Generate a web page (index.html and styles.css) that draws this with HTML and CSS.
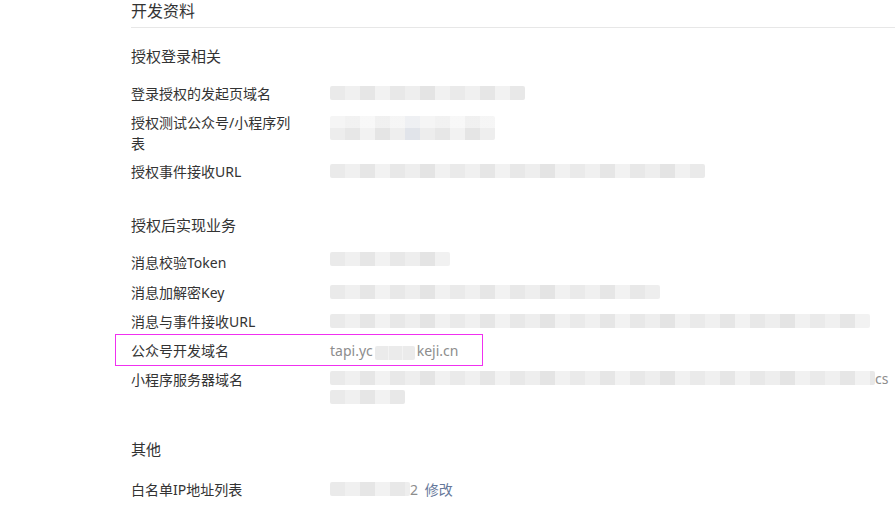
FILE: index.html
```html
<!DOCTYPE html>
<html lang="zh-CN">
<head>
    <meta charset="UTF-8">
    <meta name="viewport" content="width=device-width, initial-scale=1.0">
    <title>开发资料</title>
    <link rel="stylesheet" href="styles.css">
</head>
<body>
    <div class="page">
        <h2 class="title">开发资料</h2>

        <div class="section first">
            <h3>授权登录相关</h3>
            <div class="rows">
                <div class="row">
                    <span class="label">登录授权的发起页域名</span>
                    <span class="value"><i class="mosaic m-195"></i></span>
                </div>
                <div class="row">
                    <span class="label multi">授权测试公众号/小程序列表</span>
                    <span class="value"><i class="mosaic m-165 tall"></i></span>
                </div>
                <div class="row">
                    <span class="label">授权事件接收URL</span>
                    <span class="value"><i class="mosaic m-375"></i></span>
                </div>
            </div>
        </div>

        <div class="section">
            <h3>授权后实现业务</h3>
            <div class="rows">
                <div class="row">
                    <span class="label">消息校验Token</span>
                    <span class="value"><i class="mosaic m-120 high"></i></span>
                </div>
                <div class="row">
                    <span class="label">消息加解密Key</span>
                    <span class="value"><i class="mosaic m-330"></i></span>
                </div>
                <div class="row">
                    <span class="label">消息与事件接收URL</span>
                    <span class="value"><i class="mosaic m-540"></i></span>
                </div>
                <div class="row marked">
                    <span class="label">公众号开发域名</span>
                    <span class="value">tapi.yc<i class="mosaic m-42 low"></i>keji.cn</span>
                </div>
                <div class="row">
                    <span class="label">小程序服务器域名</span>
                    <span class="value wrap"><i class="mosaic m-545"></i>cs<br><i class="mosaic m-75"></i></span>
                </div>
            </div>
        </div>

        <div class="section">
            <h3 class="spaced">其他</h3>
            <div class="rows">
                <div class="row">
                    <span class="label">白名单IP地址列表</span>
                    <span class="value"><i class="mosaic m-80"></i>2 <a class="edit" href="#">修改</a></span>
                </div>
            </div>
        </div>
    </div>
</body>
</html>
```

FILE: styles.css
```css
body {
    margin: 0;
    background-color: #fff;
    font-family: "Noto Sans", "Noto Sans CJK SC", sans-serif;
    color: #333;
    overflow: hidden;
}
.page {
    padding-left: 131px;
}
.title {
    margin: 0;
    font-size: 16px;
    font-weight: normal;
    line-height: 22px;
    padding-bottom: 5px;
    border-bottom: 1px solid #e7e7e7;
}
.section {
    margin-top: 31px;
}
.section.first {
    margin-top: 17px;
}
.section h3 {
    margin: 0 0 16px;
    font-size: 15px;
    font-weight: normal;
    line-height: 22px;
}
.section h3.spaced {
    margin-bottom: 19px;
}
.rows {
    display: flex;
    flex-direction: column;
    gap: 7.2px;
}
.row {
    display: grid;
    grid-template-columns: 166px 1fr;
    column-gap: 33px;
    font-size: 14px;
    line-height: 22px;
    position: relative;
}
.row .label.multi {
    line-height: 21px;
}
.row.marked::after {
    content: "";
    position: absolute;
    left: -16px;
    top: -6px;
    width: 366px;
    height: 30px;
    border: 1px solid #f030f0;
}
.value {
    color: #8d8d8d;
    white-space: nowrap;
}
.value.wrap {
    line-height: 19px;
}
.mosaic {
    display: inline-block;
    height: 14px;
    vertical-align: -1px;
    background: repeating-linear-gradient(90deg,
        #eaeaea 0 15px, #f0f0f0 15px 30px, #e6e6e6 30px 45px,
        #f2f2f2 45px 60px, #e8e8e8 60px 75px, #eeeeee 75px 90px,
        #e4e4e4 90px 105px, #f1f1f1 105px 120px);
    filter: blur(0.6px);
    border-radius: 2px;
}
.mosaic.tall {
    height: 24px;
    vertical-align: -12px;
    background:
        linear-gradient(rgba(255, 255, 255, 0.45) 0 50%, transparent 50%),
        repeating-linear-gradient(90deg,
            #ededed 0 15px, #e7e7e7 15px 30px, #f2f2f2 30px 45px,
            #e5e5e5 45px 60px, #eeeeee 60px 75px, #e1e4ea 75px 90px);
}
.mosaic.high {
    vertical-align: 2px;
}
.mosaic.low {
    height: 14px;
    vertical-align: -4px;
    background: repeating-linear-gradient(90deg, #ebebeb 0 13px, #f3f3f3 13px 14px);
    margin: 0 2px;
}
.m-42 { width: 40px; }
.m-75 { width: 75px; }
.m-80 { width: 80px; }
.m-120 { width: 120px; }
.m-165 { width: 165px; }
.m-195 { width: 195px; }
.m-330 { width: 330px; }
.m-375 { width: 375px; }
.m-540 { width: 540px; }
.m-545 { width: 545px; }
.edit {
    color: #66789a;
    text-decoration: none;
    margin-left: 3px;
}
```
